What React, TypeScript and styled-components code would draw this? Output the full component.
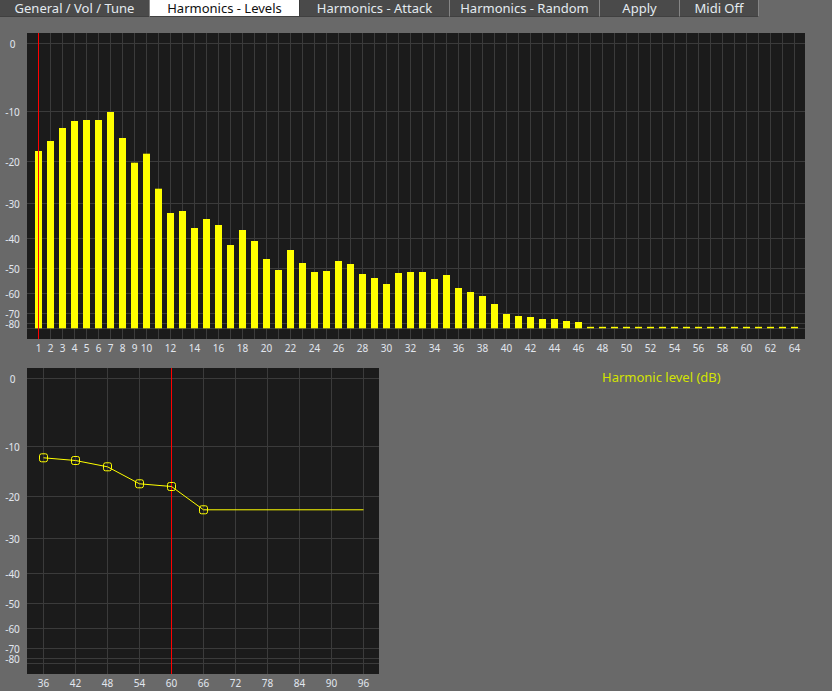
import React from "react";
import styled, { createGlobalStyle } from "styled-components";

const GlobalStyle = createGlobalStyle`
  html, body { margin: 0; padding: 0; background: #696969; }
  body { font-family: "Noto Sans", "DejaVu Sans", sans-serif; overflow: hidden; }
`;

const Page = styled.div`
  width: 832px;
  height: 691px;
  background: #696969;
  display: flex;
  flex-direction: column;
`;

const TabBar = styled.div`
  display: flex;
  height: 17px;
`;

const Tab = styled.div<{ $active?: boolean; $w: number }>`
  box-sizing: border-box;
  width: ${(p) => p.$w}px;
  height: 17px;
  display: flex;
  align-items: center;
  justify-content: center;
  font-size: 13px;
  line-height: 14px;
  background: ${(p) => (p.$active ? "#ffffff" : "#4a4a4a")};
  color: ${(p) => (p.$active ? "#101010" : "#e4eaf0")};
  border-right: 1px solid ${(p) => (p.$active ? "#3a3a3a" : "#858585")};
  border-bottom: 1px solid #404040;
  white-space: nowrap;
`;

const TabLabel = styled.span`
  display: block;
  line-height: 14px;
  margin-top: -1px;
`;

const Content = styled.div`
  padding-top: 16px;
  display: flex;
  flex-direction: column;
`;

const ChartSvg = styled.svg`
  display: block;
  font-family: "Noto Sans", "DejaVu Sans", sans-serif;
  font-size: 10px;
`;

const BottomRow = styled.div`
  display: flex;
  margin-top: 9px;
`;

const Legend = styled.div`
  margin-left: 222px;
  margin-top: 0px;
  font-size: 13px;
  line-height: 18px;
  color: #d4e400;
  white-space: nowrap;
`;

const PLOT_BG = "#1b1b1b";
const GRID = "#3b3b3b";
const LABEL = "#e2e7ef";
const YELLOW = "#ffff00";
const RED = "#ff0000";

// horizontal grid (relative to plot top) and labels
const H_LINES: [number, string | null][] = [
  [10, "0"],
  [78, "-10"],
  [128, "-20"],
  [170, "-30"],
  [205, "-40"],
  [235, "-50"],
  [260, "-60"],
  [280, "-70"],
  [290, "-80"],
  [295, null],
];

const PLOT_H = 306;
const PLOT_L = 27;

// bar tops (absolute page y) for harmonics 1..46
const TOPS = [
  151, 141, 128, 121, 120, 120, 112, 138, 162.7, 153.7, 188.7, 213, 211, 228, 219, 225, 245, 230, 241, 259,
  270, 250, 263, 272, 271, 261, 264, 274, 278, 284, 273, 272, 272, 279, 275, 288, 292, 296, 304, 314, 316,
  317, 319, 319, 321, 322,
];

const AxisLabelsY: React.FC = () => (
  <>
    {H_LINES.filter(([, t]) => t).map(([y, t]) => (
      <text key={`yl${y}`} x={12.5} y={y + 0.5} textAnchor="middle" dominantBaseline="central" fill={LABEL}>
        {t}
      </text>
    ))}
  </>
);

const TopChart: React.FC = () => {
  const W = 806;
  const plotR = 805;
  const floor = 295.3;
  const cx = (i: number) => 38 + (i - 1) * 12;
  const labels: number[] = [];
  for (let i = 1; i <= 10; i++) labels.push(i);
  for (let i = 12; i <= 64; i += 2) labels.push(i);
  return (
    <ChartSvg width={W} height={326} viewBox={`0 0 ${W} 326`}>
      <rect x={PLOT_L} y={0} width={plotR - PLOT_L} height={PLOT_H} fill={PLOT_BG} />
      {H_LINES.map(([y]) => (
        <line key={`h${y}`} x1={PLOT_L} x2={plotR} y1={y + 0.5} y2={y + 0.5} stroke={GRID} strokeWidth={1} />
      ))}
      {Array.from({ length: 63 }, (_, k) => k + 2).map((i) => (
        <line key={`v${i}`} x1={cx(i) + 0.5} x2={cx(i) + 0.5} y1={0} y2={PLOT_H} stroke={GRID} strokeWidth={1} />
      ))}
      {Array.from({ length: 64 }, (_, k) => k + 1).map((i) => {
        const top = i <= TOPS.length ? TOPS[i - 1] - 33 : floor - 1.5;
        return <rect key={`b${i}`} x={cx(i) - 3} y={top} width={7} height={floor - top} fill={YELLOW} />;
      })}
      <line x1={38.5} x2={38.5} y1={0} y2={PLOT_H} stroke={RED} strokeWidth={1} />
      <AxisLabelsY />
      {labels.map((i) => (
        <text key={`xl${i}`} x={cx(i) + 0.5} y={314.5} textAnchor="middle" dominantBaseline="central" fill={LABEL}>
          {i}
        </text>
      ))}
    </ChartSvg>
  );
};

const POINTS: [number, number][] = [
  [43, 89.3],
  [75, 92],
  [107, 98.3],
  [139, 115.3],
  [171, 118],
  [203, 141.3],
];

const BottomChart: React.FC = () => {
  const W = 380;
  const plotR = 379;
  const xs = Array.from({ length: 11 }, (_, k) => 43 + k * 32);
  const vals = Array.from({ length: 11 }, (_, k) => 36 + k * 6);
  const pts = POINTS.map(([x, y]) => `${x + 0.5},${y + 0.5}`).join(" ");
  const last = POINTS[POINTS.length - 1];
  return (
    <ChartSvg width={W} height={323} viewBox={`0 0 ${W} 323`}>
      <rect x={PLOT_L} y={0} width={plotR - PLOT_L} height={PLOT_H} fill={PLOT_BG} />
      {H_LINES.map(([y]) => (
        <line key={`h${y}`} x1={PLOT_L} x2={plotR} y1={y + 0.5} y2={y + 0.5} stroke={GRID} strokeWidth={1} />
      ))}
      {xs.map((x) => (
        <line key={`v${x}`} x1={x + 0.5} x2={x + 0.5} y1={0} y2={PLOT_H} stroke={GRID} strokeWidth={1} />
      ))}
      <line x1={171.5} x2={171.5} y1={0} y2={PLOT_H} stroke={RED} strokeWidth={1} />
      <polyline points={pts} fill="none" stroke={YELLOW} strokeWidth={1} />
      <line x1={last[0] + 0.5} x2={363.5} y1={last[1] + 0.5} y2={last[1] + 0.5} stroke={YELLOW} strokeWidth={1} />
      {POINTS.map(([x, y]) => (
        <rect
          key={`m${x}`}
          x={x - 3.5}
          y={y - 3.5}
          width={8}
          height={8}
          rx={2}
          fill="none"
          stroke={YELLOW}
          strokeWidth={1}
        />
      ))}
      <AxisLabelsY />
      {xs.map((x, k) => (
        <text key={`xl${x}`} x={x + 0.5} y={314.7} textAnchor="middle" dominantBaseline="central" fill={LABEL}>
          {vals[k]}
        </text>
      ))}
    </ChartSvg>
  );
};

const TABS: { label: string; w: number; active?: boolean }[] = [
  { label: "General / Vol / Tune", w: 150 },
  { label: "Harmonics - Levels", w: 150, active: true },
  { label: "Harmonics - Attack", w: 150 },
  { label: "Harmonics - Random", w: 150 },
  { label: "Apply", w: 80 },
  { label: "Midi Off", w: 79 },
];

export default function App() {
  return (
    <>
      <GlobalStyle />
      <Page>
        <TabBar>
          {TABS.map((t) => (
            <Tab key={t.label} $w={t.w} $active={t.active}>
              <TabLabel>{t.label}</TabLabel>
            </Tab>
          ))}
        </TabBar>
        <Content>
          <TopChart />
          <BottomRow>
            <BottomChart />
            <Legend>Harmonic level (dB)</Legend>
          </BottomRow>
        </Content>
      </Page>
    </>
  );
}
